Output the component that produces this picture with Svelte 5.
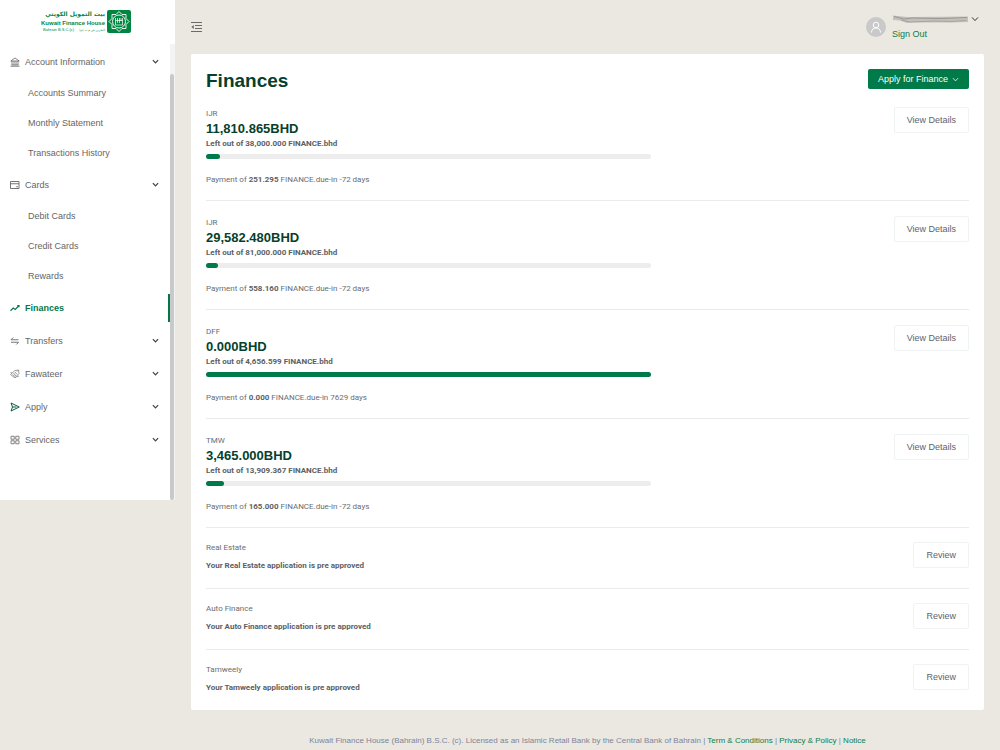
<script lang="ts">
  type MenuItem = {
    label: string,
    icon: string,
    active?: boolean,
    children?: string[]
  };

  type Finance = {
    type: string,
    amount: string,
    total: string,
    paid: number,
    payment: string,
    days: number
  };

  const menu: MenuItem[] = [
    { label: 'Account Information', icon: 'bank', children: ['Accounts Summary', 'Monthly Statement', 'Transactions History'] },
    { label: 'Cards', icon: 'card', children: ['Debit Cards', 'Credit Cards', 'Rewards'] },
    { label: 'Finances', icon: 'chart', active: true },
    { label: 'Transfers', icon: 'swap', children: [] },
    { label: 'Fawateer', icon: 'bill', children: [] },
    { label: 'Apply', icon: 'send', children: [] },
    { label: 'Services', icon: 'grid', children: [] }
  ];

  const finances: Finance[] = [
    { type: 'IJR', amount: '11,810.865', total: '38,000.000', paid: 3.2, payment: '251.295', days: -72 },
    { type: 'IJR', amount: '29,582.480', total: '81,000.000', paid: 2.6, payment: '558.160', days: -72 },
    { type: 'DFF', amount: '0.000', total: '4,656.599', paid: 100, payment: '0.000', days: 7629 },
    { type: 'TMW', amount: '3,465.000', total: '13,909.367', paid: 4, payment: '165.000', days: -72 }
  ];

  const offers = ['Real Estate', 'Auto Finance', 'Tamweely'];

  let closed: Record<string, boolean> = $state({});

  function toggle(label: string) {
    closed[label] = !closed[label];
  }
</script>

{#snippet chevron(size: number, width: number)}
  <svg class="chevron" width={size} height={size} viewBox="0 0 8 8" fill="none" stroke="currentColor" stroke-width={width} aria-hidden="true">
    <path d="M1 2.4 4 5.6 7 2.4" />
  </svg>
{/snippet}

{#snippet menuIcon(name: string)}
  <svg class="icon" width="10" height="10" viewBox="0 0 20 20" fill="none" stroke="currentColor" stroke-width="1.6" aria-hidden="true">
    {#if name === 'bank'}
      <path d="M1.5 8 10 2l8.500 6zM1 18.500h18M3 16h14M4 8v8M8 8v8M12 8v8M16 8v8" />
    {:else if name === 'card'}
      <path d="M1 3h17v14H1zM1 7.500h17M12.500 13.500h3.500" stroke-width="1.800" />
    {:else if name === 'chart'}
      <path d="M1 15.500 6.500 10l4 3L18 5M14.500 5H18v3.500" stroke-width="2.200" />
    {:else if name === 'swap'}
      <path d="M17 7.500H2L6.500 3M2 12.500h15L12.500 17" stroke-width="1.800" />
    {:else if name === 'bill'}
      <path d="M1 11 10 3l7-1 1 7-8 9zM5 11l6 5M7 8l5 6M10 6l4 5M14 5l2-2M4 8l-3-1M13 16l5-2" stroke-width="1.300" />
    {:else if name === 'send'}
      <path d="M2 2 18.500 10 2 18 5 10zM5 10h8" stroke-width="2" />
    {:else}
      <path d="M2 2.500h6.500v6H2zM11.500 2.500H18v6h-6.500zM2 11.500h6.500v6H2zM11.500 11.500H18v6h-6.500z" />
    {/if}
  </svg>
{/snippet}

<div class="layout">
  <aside class="sidebar">
    <a class="logo" href="#home" aria-label="Kuwait Finance House">
      <svg width="94" height="26" viewBox="-4 0 94 26">
        <g fill="#008641">
          <text class="logo-ar" x="62" y="7" direction="rtl">بيت التمويل الكويتي</text>
          <text class="logo-en" x="62" y="16" text-anchor="end">Kuwait Finance House</text>
          <text class="logo-sub" x="0" y="22">Bahrain B.S.C.(c)</text>
          <text class="logo-sub-ar" x="62" y="22" direction="rtl">البحرين ش.م.ب (م)</text>
        </g>
        <rect x="64" y="1" width="24" height="23" rx="2" fill="#008641" />
        <g fill="none" stroke="#fff" stroke-width="0.9">
          <path d="M76 2.500l3 3h4v4l3 3-3 3v4h-4l-3 3-3-3h-4v-4l-3-3 3-3v-4h4z" />
          <circle cx="76" cy="12.500" r="6.500" />
          <path d="M72.500 9v7h7V9M74.500 9v5M76.500 9v5M72.500 11.500h7M78 9v3" stroke-width="0.700" />
        </g>
      </svg>
    </a>
    <div class="sidebar-body">
      <nav>
        {#each menu as item}
          {#if item.children}
            <button class="item" class:apply={item.icon === 'send'} onclick={() => toggle(item.label)}>
              {@render menuIcon(item.icon)}
              <span>{item.label}</span>
              {@render chevron(7, 1.4)}
            </button>
            {#if !closed[item.label]}
              {#each item.children as child}
                <a class="sub" href="#{child.toLowerCase().replace(' ', '-')}">{child}</a>
              {/each}
            {/if}
          {:else}
            <a class="item" class:active={item.active} href="#{item.label.toLowerCase()}">
              {@render menuIcon(item.icon)}
              <span>{item.label}</span>
            </a>
          {/if}
        {/each}
      </nav>
      <div class="scrollbar"><div class="thumb"></div></div>
    </div>
  </aside>

  <div class="page">
    <header>
      <button class="fold" aria-label="Toggle menu">
        <svg width="11" height="10" viewBox="0 0 11 10" fill="none" stroke="#6b6b6b" stroke-width="1">
          <path d="M0 .5h11M4 3.500h7M4 6.500h7M0 9.500h11" />
          <path d="M2.800 3v4L.3 5z" fill="#6b6b6b" stroke="none" />
        </svg>
      </button>
      <div class="user">
        <span class="avatar">
          <svg width="12" height="12" viewBox="0 0 12 12" fill="none" stroke="#fff" stroke-width="1">
            <circle cx="6" cy="4" r="2.800" />
            <path d="M1.500 11.500C1.500 8.500 3.500 7 6 7s4.500 1.500 4.500 4.500" />
          </svg>
        </span>
        <div class="account">
          <button class="name" aria-label="Account menu">
            <svg width="78" height="10" viewBox="0 0 78 10">
              <defs>
                <filter id="smear" x="-5%" y="-30%" width="110%" height="160%"><feGaussianBlur stdDeviation="0.7" /></filter>
                <filter id="streak" x="-5%" y="-100%" width="110%" height="300%"><feGaussianBlur stdDeviation="0.5" /></filter>
              </defs>
              <path d="M1 1.500 16 3l60-.5v5.500L60 8.500H20L15 9 8 6.500 1 6z" fill="#c3c0bb" filter="url(#smear)" />
              <g fill="none" filter="url(#streak)">
                <path d="M2 2.500 12 5l8-1 30 .5 25-1" stroke="#9a9693" stroke-width="1" />
                <path d="M9 6l9 2 26-1 14 .5 16-1" stroke="#a8a4a0" stroke-width="1" />
              </g>
            </svg>
            {@render chevron(8, 1)}
          </button>
          <a href="#sign-out">Sign Out</a>
        </div>
      </div>
    </header>

    <main>
      <div class="title">
        <h1>Finances</h1>
        <button class="primary">Apply for Finance {@render chevron(7, 0.9)}</button>
      </div>

      {#each finances as finance}
        <section class="finance">
          <div class="info">
            <p>{finance.type}</p>
            <h2>{finance.amount}BHD</h2>
            <p class="bold">Left out of {finance.total} FINANCE.bhd</p>
            <div class="progress">
              <div class="bar" style="width: {finance.paid}%"></div>
            </div>
            <p>Payment of <b>{finance.payment}</b> FINANCE.due-in {finance.days} days</p>
          </div>
          <button class="outline">View Details</button>
        </section>
      {/each}

      {#each offers as offer}
        <section class="offer">
          <div class="info">
            <p>{offer}</p>
            <p class="bold">Your {offer} application is pre approved</p>
          </div>
          <button class="outline">Review</button>
        </section>
      {/each}
    </main>

    <footer>
      Kuwait Finance House (Bahrain) B.S.C. (c). Licensed as an Islamic Retail Bank by the Central Bank of Bahrain |
      <a href="#terms">Term &amp; Conditions</a> | <a href="#privacy">Privacy &amp; Policy</a> | <a href="#notice">Notice</a>
    </footer>
  </div>
</div>

<style>
  :global(body) {
    background-color: #ebe8e1;
    font-family: "Liberation Sans", Arial, sans-serif;
    font-size: 9px;
    color: #5f6368;
  }

  button {
    font: inherit;
    color: inherit;
    cursor: pointer;
  }

  a {
    color: #0b7d4b;
    text-decoration: none;
  }

  svg {
    display: block;
    flex: none;
  }

  .layout {
    display: flex;
    align-items: flex-start;
  }

  .sidebar {
    flex: none;
    width: 175px;
    background-color: white;
  }

  .logo {
    display: flex;
    box-sizing: border-box;
    height: 44px;
    padding: 9px 0 0 39px;
  }

  .logo-ar {
    font: bold 6px "DejaVu Sans", sans-serif;
  }

  .logo-en {
    font: bold 6px "Liberation Sans", sans-serif;
  }

  .logo-sub {
    font: 4px "Liberation Sans", sans-serif;
  }

  .logo-sub-ar {
    font: 3px "DejaVu Sans", sans-serif;
  }

  .sidebar-body {
    display: flex;
  }

  nav {
    flex: 1;
    padding: 1px 0 44px;
  }

  .item {
    display: flex;
    align-items: center;
    gap: 5px;
    box-sizing: border-box;
    width: 100%;
    height: 33px;
    padding: 0 11px 0 10px;
    border: none;
    background: none;
    color: #666;
    text-align: left;
  }

  .item span {
    flex: 1;
  }

  .item .chevron {
    color: #444;
  }

  .item.apply .icon {
    color: #0f5a42;
  }

  .item.active {
    position: relative;
    color: #067647;
    font-weight: bold;
  }

  .item.active::after {
    content: "";
    position: absolute;
    right: 0;
    top: 3px;
    bottom: 2px;
    width: 2px;
    background-color: #067647;
  }

  .sub {
    display: block;
    padding-left: 28px;
    line-height: 30px;
    color: #666;
  }

  .scrollbar {
    width: 5px;
    padding-top: 30px;
    box-sizing: border-box;
    display: flex;
    background-color: #f3f3f3;
  }

  .thumb {
    width: 4px;
    border-radius: 2px;
    background-color: #c8c9ca;
  }

  .page {
    flex: 1;
    min-width: 0;
    padding: 0 16px;
  }

  header {
    display: flex;
    justify-content: space-between;
    align-items: center;
    height: 54px;
  }

  .fold {
    padding: 0;
    border: none;
    background: none;
  }

  .user {
    display: flex;
    align-items: center;
    gap: 6px;
    padding-right: 5px;
  }

  .avatar {
    display: flex;
    align-items: center;
    justify-content: center;
    width: 20px;
    height: 20px;
    border-radius: 50%;
    background-color: #c9c9c9;
  }

  .name {
    display: flex;
    align-items: center;
    gap: 1px;
    padding: 0;
    margin-bottom: 4px;
    border: none;
    background: none;
    color: #333;
  }

  .account a {
    display: block;
    line-height: 12px;
  }

  main {
    padding: 15px 15px 0;
    border-radius: 2px;
    background-color: white;
  }

  .title {
    display: flex;
    justify-content: space-between;
    height: 20px;
    margin-bottom: 3px;
  }

  h1 {
    margin: 0;
    font-size: 19px;
    line-height: 24px;
    color: #073f2d;
  }

  .primary {
    display: flex;
    align-items: center;
    gap: 4px;
    height: 20px;
    padding: 0 10px;
    border: none;
    border-radius: 2px;
    background-color: #007a49;
    color: white;
  }

  section {
    display: flex;
    justify-content: space-between;
    align-items: flex-start;
    border-bottom: 1px solid #e8eced;
  }

  section:last-child {
    border-bottom: none;
  }

  .finance {
    padding: 15px 0 14px;
  }

  .finance .info {
    width: 445px;
    padding-top: 1px;
  }

  .offer {
    padding: 14px 0 16px;
  }

  p {
    margin: 0;
    font-family: Roboto, "Liberation Sans", sans-serif;
    font-size: 8px;
    line-height: 12px;
    color: #6a6d72;
  }

  .bold,
  b {
    font-weight: bold;
    color: #5c6065;
  }

  .offer .bold {
    margin-top: 6px;
  }

  h2 {
    margin: 0;
    font-size: 13px;
    line-height: 18px;
    color: #073f2d;
  }

  .progress {
    margin: 4px 0 15px;
    border-radius: 3px;
    background-color: #ededed;
  }

  .bar {
    height: 5px;
    border-radius: 3px;
    background-color: #007a49;
  }

  .outline {
    height: 26px;
    padding: 0 12px;
    border: 1px solid #eff3f4;
    border-radius: 2px;
    background-color: white;
  }

  footer {
    padding: 25px 0 4px;
    font-size: 8px;
    line-height: 12px;
    text-align: center;
    color: #7d8499;
  }
</style>
